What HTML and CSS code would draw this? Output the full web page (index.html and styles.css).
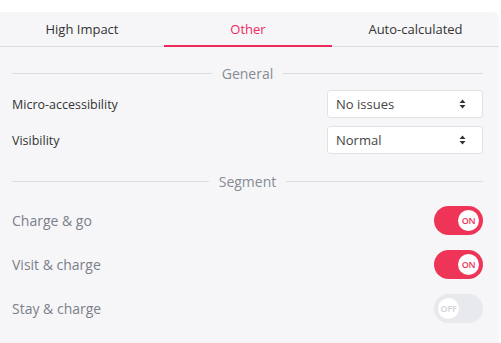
FILE: index.html
```html
<!DOCTYPE html>
<html lang="en">
<head>
    <meta charset="UTF-8">
    <title>Station settings</title>
    <link rel="stylesheet" href="styles.css">
</head>
<body>
    <div class="panel">
        <div class="tabs">
            <div class="tab">High Impact</div>
            <div class="tab active">Other</div>
            <div class="tab">Auto-calculated</div>
        </div>

        <div class="content">
            <div class="divider general"><span>General</span></div>

            <div class="form-row first">
                <label>Micro-accessibility</label>
                <div class="select">
                    <span>No issues</span>
                    <svg width="7" height="10" viewBox="0 0 7 10"><path d="M3.5 0.5 L6.5 4 L0.5 4 Z M3.5 9.5 L6.5 6 L0.5 6 Z" fill="#333"/></svg>
                </div>
            </div>
            <div class="form-row">
                <label>Visibility</label>
                <div class="select">
                    <span>Normal</span>
                    <svg width="7" height="10" viewBox="0 0 7 10"><path d="M3.5 0.5 L6.5 4 L0.5 4 Z M3.5 9.5 L6.5 6 L0.5 6 Z" fill="#333"/></svg>
                </div>
            </div>

            <div class="divider segment"><span>Segment</span></div>

            <div class="toggle-row">
                <span class="toggle-label">Charge &amp; go</span>
                <div class="toggle on"><span class="knob">ON</span></div>
            </div>
            <div class="toggle-row">
                <span class="toggle-label">Visit &amp; charge</span>
                <div class="toggle on"><span class="knob">ON</span></div>
            </div>
            <div class="toggle-row">
                <span class="toggle-label">Stay &amp; charge</span>
                <div class="toggle off"><span class="knob">OFF</span></div>
            </div>
        </div>
    </div>
</body>
</html>
```

FILE: styles.css
```css
body {
    margin: 0;
    background-color: #ffffff;
    font-family: "Open Sans", Arial, sans-serif;
    color: #333;
}
.panel {
    margin-top: 12px;
    width: 499px;
    height: 331px;
    background-color: #f6f6f8;
    border-top-right-radius: 6px;
}
.tabs {
    display: grid;
    grid-template-columns: 164px 168px 167px;
    height: 34px;
    border-bottom: 1px solid #dcdde0;
}
.tab {
    display: flex;
    align-items: center;
    justify-content: center;
    font-size: 13px;
    color: #333;
}
.tab.active {
    color: #ee2a5d;
    border-bottom: 2px solid #ee2a5d;
    margin-bottom: -1px;
}
.content {
    padding: 0 16px 0 12px;
}
.divider {
    display: flex;
    align-items: center;
    gap: 10px;
    height: 20px;
    font-size: 14px;
    color: #868b94;
}
.divider::before,
.divider::after {
    content: "";
    flex: 1;
    height: 1px;
    background-color: #dcdde0;
}
.divider.general {
    margin-top: 16px;
}
.divider.segment {
    margin-top: 17px;
}
.form-row {
    display: flex;
    align-items: center;
    justify-content: space-between;
    margin-top: 8px;
}
.form-row.first {
    margin-top: 7px;
}
.form-row label {
    font-size: 12.5px;
    color: #333;
}
.select {
    width: 156px;
    height: 28px;
    box-sizing: border-box;
    display: flex;
    align-items: center;
    justify-content: space-between;
    padding: 0 16px 0 8px;
    background-color: #ffffff;
    border: 1px solid #e1e2e5;
    border-radius: 3px;
    font-size: 13px;
    color: #444;
}
.toggle-row {
    display: flex;
    align-items: center;
    justify-content: space-between;
    margin-top: 15px;
}
.toggle-label {
    font-size: 14px;
    color: #7b808a;
}
.toggle {
    width: 49px;
    height: 29px;
    border-radius: 15px;
    box-sizing: border-box;
    padding: 4px;
    display: flex;
    align-items: center;
}
.toggle.on {
    background-color: #ee3558;
    justify-content: flex-end;
}
.toggle.off {
    background-color: #e8e9ec;
    justify-content: flex-start;
}
.knob {
    width: 21px;
    height: 21px;
    border-radius: 50%;
    background-color: #ffffff;
    display: flex;
    align-items: center;
    justify-content: center;
    font-size: 9px;
    font-weight: 600;
    letter-spacing: -0.3px;
}
.toggle.on .knob {
    color: #ee3558;
}
.toggle.off .knob {
    color: #d2d4d8;
}
```
